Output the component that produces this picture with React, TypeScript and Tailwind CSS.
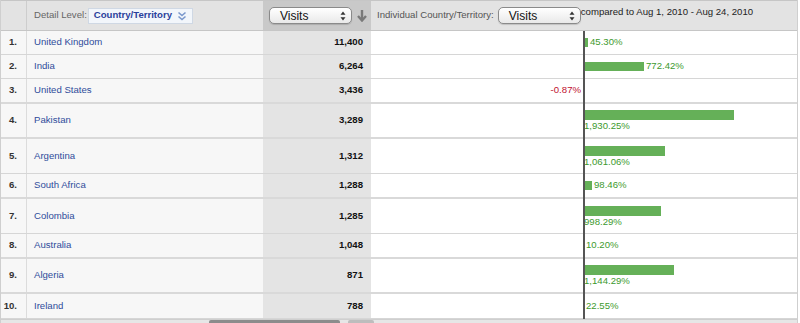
import React from "react";

type Row = {
  n: string;
  c: string;
  v: string;
  bar: number;
  t: string;
  neg?: boolean;
  h: string;
  wrap: boolean;
};

const rows: Row[] = [
  { n: "1.", c: "United Kingdom", v: "11,400", bar: 3, t: "45.30%", h: "h-[24px] border-b border-[#d6d6d6]", wrap: false },
  { n: "2.", c: "India", v: "6,264", bar: 59, t: "772.42%", h: "h-[24px] border-b border-[#d6d6d6]", wrap: false },
  { n: "3.", c: "United States", v: "3,436", bar: 0, t: "-0.87%", neg: true, h: "h-[25px] border-b-2 border-[#d9d9d9]", wrap: false },
  { n: "4.", c: "Pakistan", v: "3,289", bar: 149, t: "1,930.25%", h: "h-[35px] border-b-2 border-[#d9d9d9]", wrap: true },
  { n: "5.", c: "Argentina", v: "1,312", bar: 80, t: "1,061.06%", h: "h-[35px] border-b border-[#d6d6d6]", wrap: true },
  { n: "6.", c: "South Africa", v: "1,288", bar: 7, t: "98.46%", h: "h-[25px] border-b-2 border-[#d9d9d9]", wrap: false },
  { n: "7.", c: "Colombia", v: "1,285", bar: 76, t: "998.29%", h: "h-[35px] border-b border-[#d6d6d6]", wrap: true },
  { n: "8.", c: "Australia", v: "1,048", bar: 0, t: "10.20%", h: "h-[25px] border-b-2 border-[#d9d9d9]", wrap: false },
  { n: "9.", c: "Algeria", v: "871", bar: 89, t: "1,144.29%", h: "h-[35px] border-b-2 border-[#d9d9d9]", wrap: true },
  { n: "10.", c: "Ireland", v: "788", bar: 0, t: "22.55%", h: "h-[25px] border-b border-[#d6d6d6]", wrap: false },
];

function MacSelect({ label, w }: { label: string; w: string }) {
  return (
    <div
      className={`${w} h-[17px] flex items-center justify-between rounded-[5px] border border-[#8a8a8a] bg-gradient-to-b from-white to-[#e9e9e9] pl-[10px] pr-[5px] shadow-[0_1px_1px_rgba(0,0,0,0.15)]`}
    >
      <span className="text-[12px] leading-none text-[#111]">{label}</span>
      <svg width="6" height="10" viewBox="0 0 6 10">
        <path d="M3 0.5 L5.5 3.8 L0.5 3.8 Z" fill="#333" />
        <path d="M3 9.5 L5.5 6.2 L0.5 6.2 Z" fill="#333" />
      </svg>
    </div>
  );
}

export default function App() {
  return (
    <div className="w-[800px] h-[323px] bg-white overflow-hidden font-['Liberation_Sans',Arial,sans-serif] text-[9.6px]">
      <div className="w-[798px] border-l border-r border-[#cfcfcf]">
        {/* header */}
        <div className="grid grid-cols-[26px_236px_108px_1fr] h-[31px] border-t border-b border-[#c6c6c6] bg-[#e3e3e3]">
          <div className="border-r border-[#cdcdcd]" />
          <div className="flex items-center pl-[7px]">
            <span className="text-[#666]">Detail Level:</span>
            <div className="ml-[1px] w-[105px] h-[16px] flex items-center justify-between border border-[#cfd8e4] bg-[#f2f6fb] pl-[5px] pr-[5px]">
              <span className="font-bold text-[#2a3f9c]">Country/Territory</span>
              <svg width="10" height="10" viewBox="0 0 10 10">
                <path d="M1.5 1.5 L5 4.5 L8.5 1.5" stroke="#7b98cc" strokeWidth="1.6" fill="none" />
                <path d="M1.5 5.5 L5 8.5 L8.5 5.5" stroke="#7b98cc" strokeWidth="1.6" fill="none" />
              </svg>
            </div>
          </div>
          <div className="bg-[#c9c9c9] flex items-center pl-[6px] gap-[5px]">
            <MacSelect label="Visits" w="w-[83px]" />
            <svg width="10" height="13" viewBox="0 0 10 13">
              <path d="M5 1 L5 11" stroke="#7a7a7a" strokeWidth="2.4" />
              <path d="M1 7 L5 11.5 L9 7" stroke="#7a7a7a" strokeWidth="2.4" fill="none" />
            </svg>
          </div>
          <div className="flex items-center pl-[6px]">
            <span className="text-[#555]">Individual Country/Territory:</span>
            <div className="ml-[4px]">
              <MacSelect label="Visits" w="w-[83px]" />
            </div>
            <span className="text-[#222] self-start mt-[4px]">compared to Aug 1, 2010 - Aug 24, 2010</span>
          </div>
        </div>

        {/* body */}
        <div className="relative">
          {rows.map((r) => (
            <div key={r.n} className={`grid grid-cols-[26px_236px_108px_1fr] ${r.h}`}>
              <div className="bg-[#f7f7f7] border-r border-[#dcdcdc] flex items-center justify-end pr-[9px] font-bold text-[#333]">
                {r.n}
              </div>
              <div className="bg-[#f7f7f7] flex items-center pl-[7px] text-[#2f4c9b]">{r.c}</div>
              <div className="bg-[#e4e4e4] flex items-center justify-end pr-[8px] font-bold text-[#111]">{r.v}</div>
              <div className="bg-white flex">
                <div className="w-[212px] flex items-center justify-end pr-[2px]">
                  {r.neg && <span className="text-[#c0102f]">{r.t}</span>}
                </div>
                {!r.neg &&
                  (r.wrap ? (
                    <div className="flex-1 flex flex-col justify-center pl-[2px] pt-[1px]">
                      <div className="h-[10px] bg-[#65b058]" style={{ width: `${r.bar}px` }} />
                      <span className="text-[#3d9a2e] ml-[-1px] leading-[12px]">{r.t}</span>
                    </div>
                  ) : (
                    <div className="flex-1 flex items-center pl-[2px] gap-[2px]">
                      {r.bar > 0 && <div className="h-[9px] bg-[#65b058]" style={{ width: `${r.bar}px` }} />}
                      <span className={`text-[#3d9a2e] ${r.bar > 0 ? "" : "ml-[1px]"}`}>{r.t}</span>
                    </div>
                  ))}
              </div>
            </div>
          ))}
          <div className="absolute top-0 bottom-0 left-[582px] w-[2px] bg-[#555]" />
        </div>

        {/* footer scrollbar strip */}
        <div className="h-[4px] bg-[#e6e6e6] border-t border-[#cfcfcf] flex">
          <div className="ml-[208px] w-[131px] h-[3px] bg-[#8c8c8c] rounded-t-[2px]" />
          <div className="ml-[8px] w-[26px] h-[3px] bg-[#bdbdbd] rounded-t-[2px]" />
        </div>
      </div>
    </div>
  );
}
